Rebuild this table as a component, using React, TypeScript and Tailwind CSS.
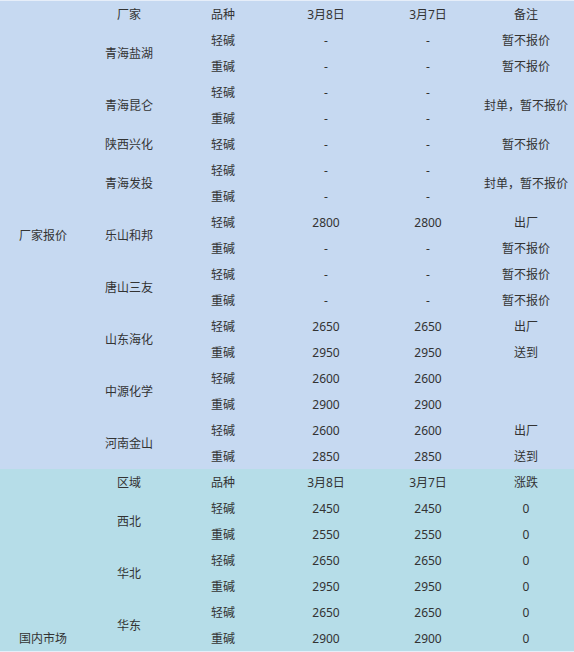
import React from "react";

type Row = { v: string; a: string; b: string; n?: string; nSpan?: number; skipN?: boolean };
type Group = { name: string; rows: Row[] };

const factory: Group[] = [
  { name: "青海盐湖", rows: [
    { v: "轻碱", a: "-", b: "-", n: "暂不报价" },
    { v: "重碱", a: "-", b: "-", n: "暂不报价" },
  ]},
  { name: "青海昆仑", rows: [
    { v: "轻碱", a: "-", b: "-", n: "封单，暂不报价", nSpan: 2 },
    { v: "重碱", a: "-", b: "-", skipN: true },
  ]},
  { name: "陕西兴化", rows: [
    { v: "轻碱", a: "-", b: "-", n: "暂不报价" },
  ]},
  { name: "青海发投", rows: [
    { v: "轻碱", a: "-", b: "-", n: "封单，暂不报价", nSpan: 2 },
    { v: "重碱", a: "-", b: "-", skipN: true },
  ]},
  { name: "乐山和邦", rows: [
    { v: "轻碱", a: "2800", b: "2800", n: "出厂" },
    { v: "重碱", a: "-", b: "-", n: "暂不报价" },
  ]},
  { name: "唐山三友", rows: [
    { v: "轻碱", a: "-", b: "-", n: "暂不报价" },
    { v: "重碱", a: "-", b: "-", n: "暂不报价" },
  ]},
  { name: "山东海化", rows: [
    { v: "轻碱", a: "2650", b: "2650", n: "出厂" },
    { v: "重碱", a: "2950", b: "2950", n: "送到" },
  ]},
  { name: "中源化学", rows: [
    { v: "轻碱", a: "2600", b: "2600", n: "" },
    { v: "重碱", a: "2900", b: "2900", n: "" },
  ]},
  { name: "河南金山", rows: [
    { v: "轻碱", a: "2600", b: "2600", n: "出厂" },
    { v: "重碱", a: "2850", b: "2850", n: "送到" },
  ]},
];

const market: Group[] = [
  { name: "西北", rows: [
    { v: "轻碱", a: "2450", b: "2450", n: "0" },
    { v: "重碱", a: "2550", b: "2550", n: "0" },
  ]},
  { name: "华北", rows: [
    { v: "轻碱", a: "2650", b: "2650", n: "0" },
    { v: "重碱", a: "2950", b: "2950", n: "0" },
  ]},
  { name: "华东", rows: [
    { v: "轻碱", a: "2650", b: "2650", n: "0" },
    { v: "重碱", a: "2900", b: "2900", n: "0" },
  ]},
];

const td = "h-[26px] px-0 pt-[2px] pb-0 text-center align-middle";

function Section({
  title,
  titleAlign,
  head,
  groups,
  bg,
}: {
  title: string;
  titleAlign: string;
  head: string[];
  groups: Group[];
  bg: string;
}) {
  const total = 1 + groups.reduce((s, g) => s + g.rows.length, 0);
  return (
    <tbody className={bg}>
      <tr>
        <td rowSpan={total} className={`h-[26px] px-0 pt-[2px] pb-0 text-center ${titleAlign}`}>
          {title}
        </td>
        {head.map((h, i) => (
          <td key={i} className={td}>{h}</td>
        ))}
      </tr>
      {groups.map((g) =>
        g.rows.map((r, i) => (
          <tr key={g.name + i}>
            {i === 0 && (
              <td rowSpan={g.rows.length} className={td}>{g.name}</td>
            )}
            <td className={td}>{r.v}</td>
            <td className={td}>{r.a}</td>
            <td className={td}>{r.b}</td>
            {!r.skipN && (
              <td rowSpan={r.nSpan ?? 1} className={td}>{r.n}</td>
            )}
          </tr>
        ))
      )}
    </tbody>
  );
}

export default function App() {
  return (
    <div className="w-[574px] h-[652px] overflow-hidden bg-[#e6eef9] pt-px">
      <table
        className="w-[574px] table-fixed border-collapse text-[12px] leading-[24px] text-[#333333]"
        style={{ fontFamily: '"Noto Sans", "Noto Sans CJK SC", sans-serif' }}
      >
        <colgroup>
          <col className="w-[86px]" />
          <col className="w-[86px]" />
          <col className="w-[102px]" />
          <col className="w-[104px]" />
          <col className="w-[100px]" />
          <col className="w-[96px]" />
        </colgroup>
        <Section
          title="厂家报价"
          titleAlign="align-middle"
          head={["厂家", "品种", "3月8日", "3月7日", "备注"]}
          groups={factory}
          bg="bg-[#c6d9f1]"
        />
        <Section
          title="国内市场"
          titleAlign="align-bottom"
          head={["区域", "品种", "3月8日", "3月7日", "涨跌"]}
          groups={market}
          bg="bg-[#b6dde8]"
        />
      </table>
    </div>
  );
}
